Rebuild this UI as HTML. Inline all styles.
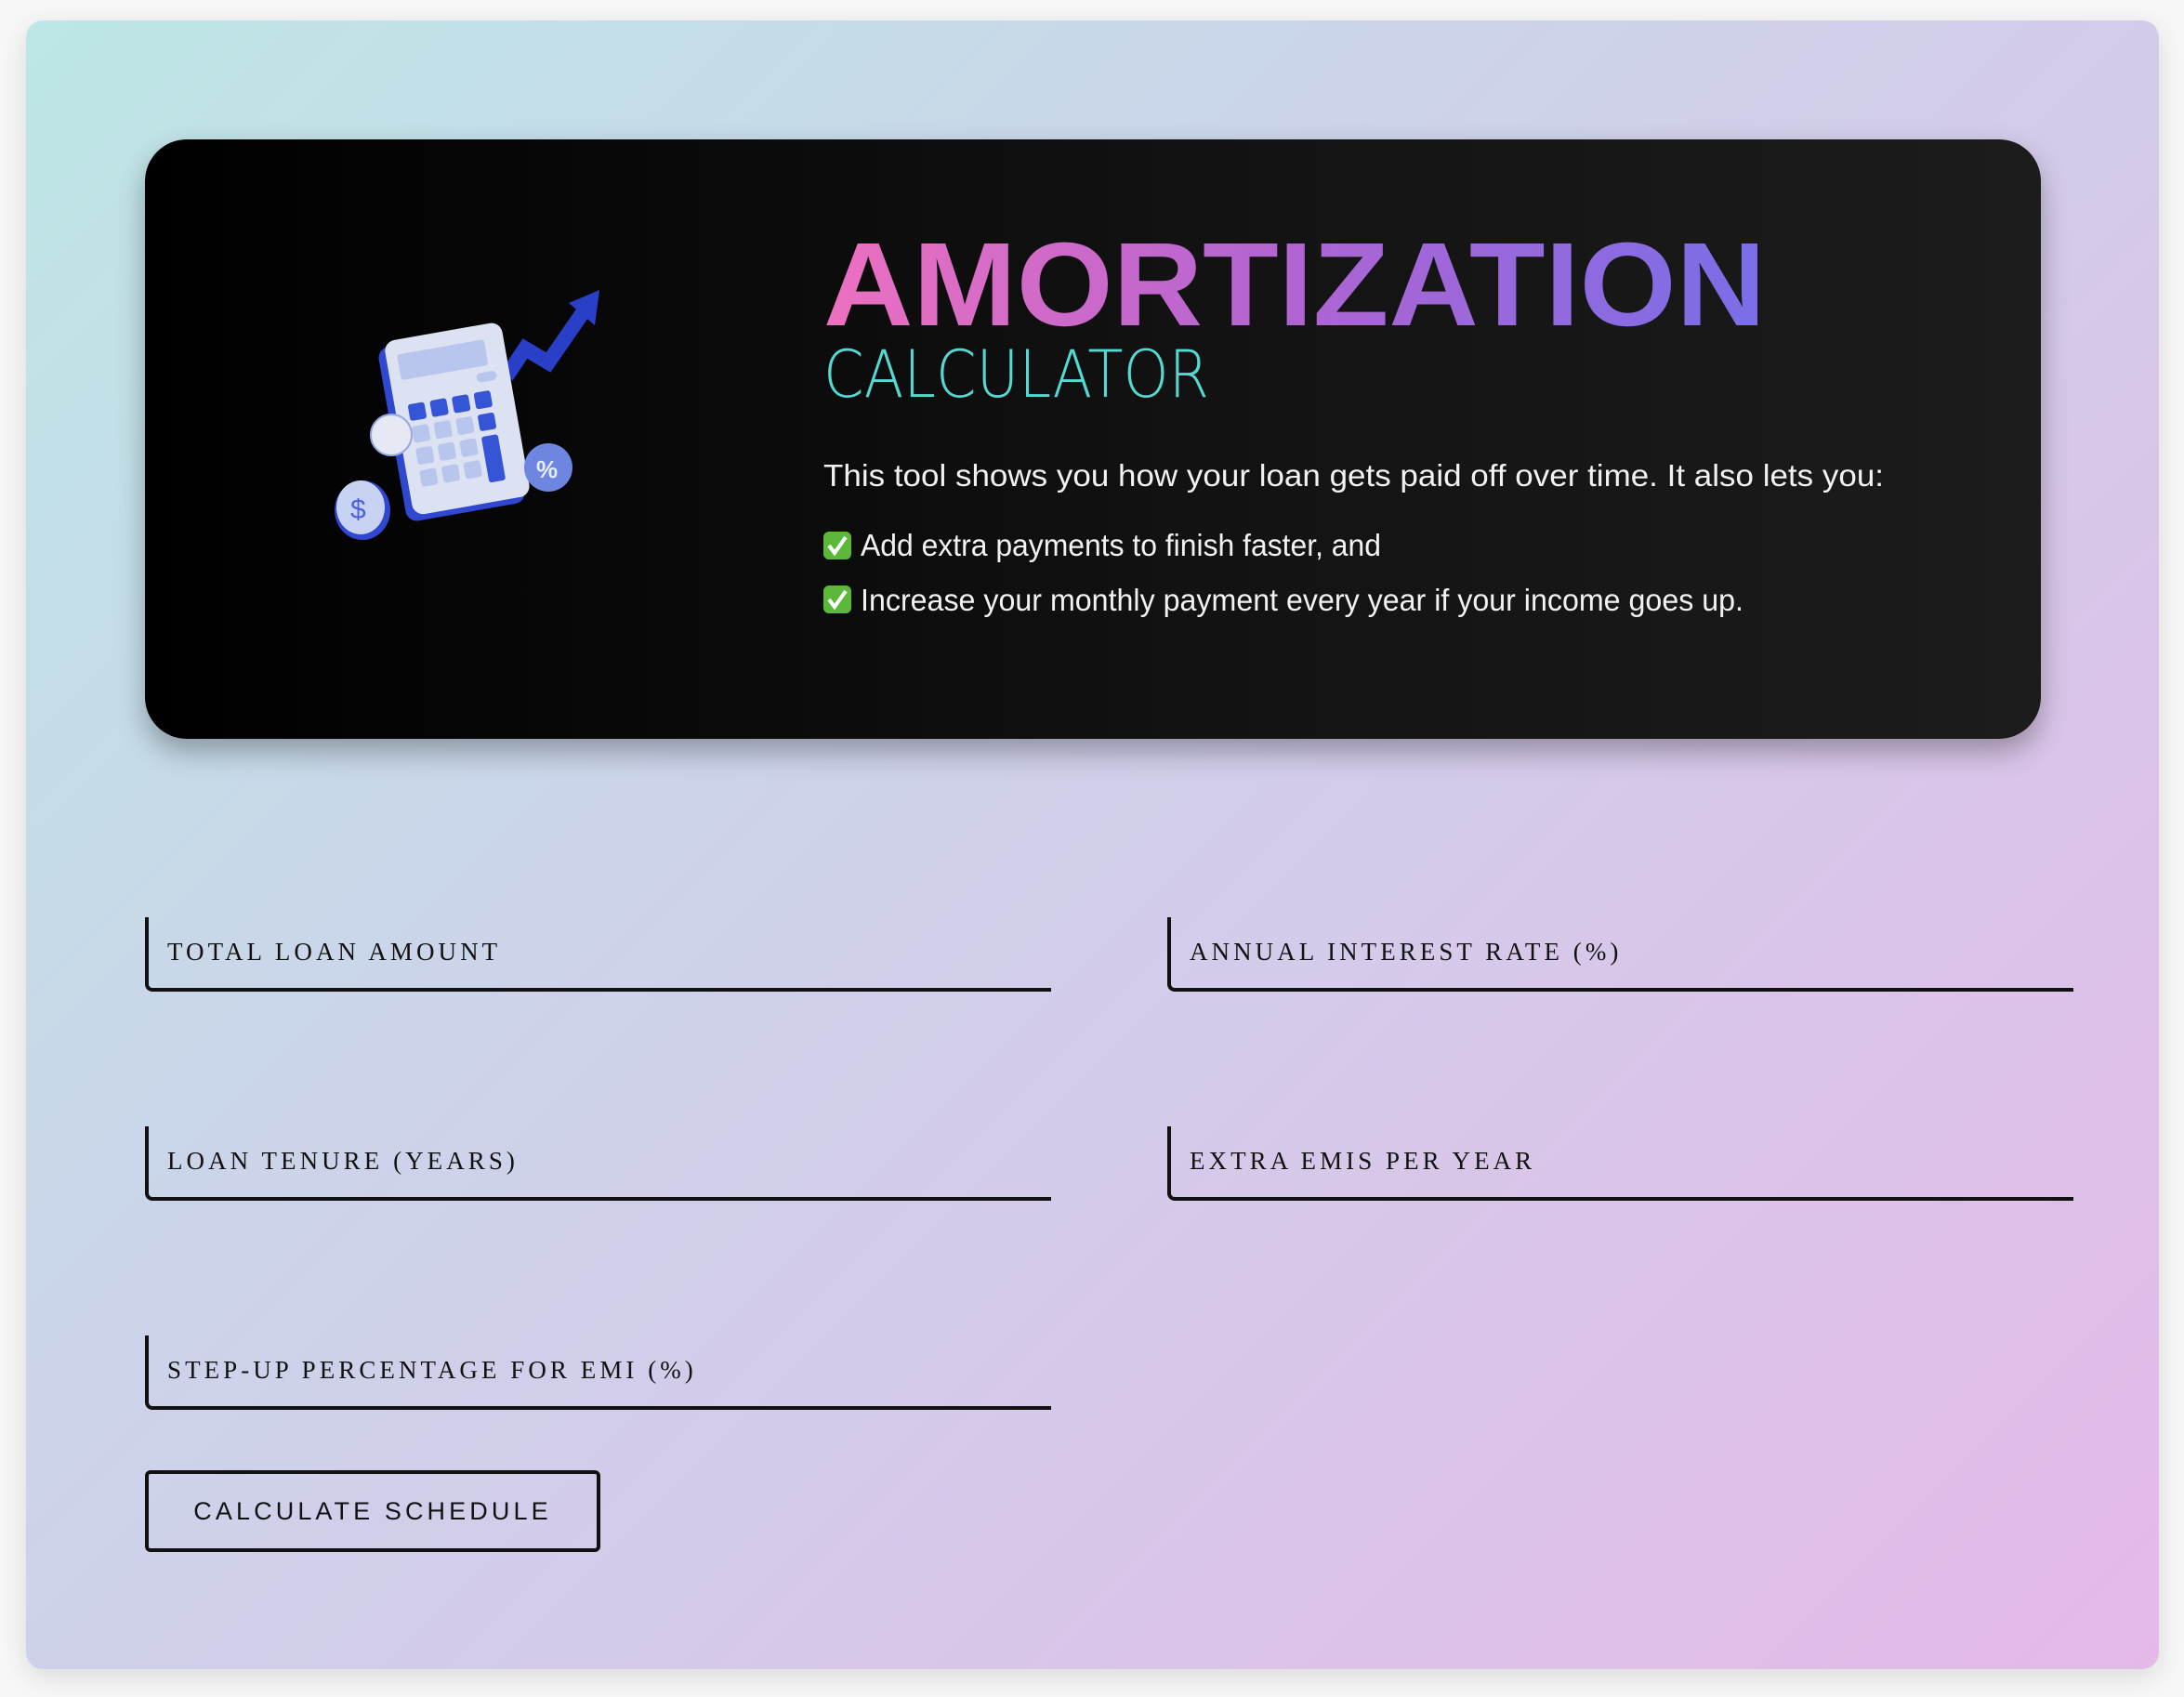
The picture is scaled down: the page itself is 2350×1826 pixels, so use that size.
<!DOCTYPE html>
<html><head><meta charset="utf-8"><style>
html,body{margin:0;padding:0;width:2350px;height:1826px;background:#f7f7f7;overflow:hidden}
.outer{position:absolute;left:28px;top:22px;width:2295px;height:1774px;border-radius:18px;background:linear-gradient(135deg,#bde6e6 0%,#cfd0ea 45%,#e4b9e8 100%);box-shadow:0 8px 30px rgba(0,0,0,.12)}
.hero{position:absolute;left:156px;top:150px;width:2040px;height:645px;border-radius:45px;background:linear-gradient(90deg,#000 0%,#121212 55%,#1c1c1c 100%);box-shadow:0 14px 30px rgba(0,0,0,.3)}
.field{position:absolute;border-left:4px solid #111;border-bottom:4px solid #111;border-bottom-left-radius:8px;height:76px;width:971px}
.field span{position:absolute;left:20px;top:22px;font-family:"Liberation Serif",serif;font-size:27px;letter-spacing:4.05px;color:#111}
.btn{position:absolute;left:156px;top:1582px;width:482px;height:80px;border:4px solid #111;border-radius:6px;font-family:"Liberation Sans",sans-serif;font-size:27px;letter-spacing:4.1px;color:#111;line-height:80px;text-align:center}
</style></head><body>
<div class="outer"></div>
<div class="hero"></div>
<svg style="position:absolute;left:0;top:0" width="2350" height="900">
<defs>
<linearGradient id="g" x1="886" x2="1900" y1="0" y2="0" gradientUnits="userSpaceOnUse">
<stop offset="0" stop-color="#ec70c0"/><stop offset="0.5" stop-color="#b064d2"/><stop offset="1" stop-color="#7a6ee8"/></linearGradient>
</defs>
<text x="886" y="350" font-family="Liberation Sans,sans-serif" font-weight="bold" font-size="128" fill="url(#g)" textLength="1014" lengthAdjust="spacingAndGlyphs">AMORTIZATION</text>
<text x="886" y="427" font-family="DejaVu Sans,sans-serif" font-size="70" fill="#55d8d2" textLength="415" lengthAdjust="spacingAndGlyphs" style="font-weight:200">CALCULATOR</text>
<text x="886" y="523" font-family="Liberation Sans,sans-serif" font-size="33" fill="#f2f2f2" textLength="1141" lengthAdjust="spacingAndGlyphs">This tool shows you how your loan gets paid off over time. It also lets you:</text>
<rect x="886" y="572" width="30" height="30" rx="6" fill="#5cb83a"/><path d="M892 587l6 8 12-17" stroke="#fff" stroke-width="4" fill="none"/>
<text x="926" y="598" font-family="Liberation Sans,sans-serif" font-size="33" fill="#f2f2f2" textLength="560" lengthAdjust="spacingAndGlyphs">Add extra payments to finish faster, and</text>
<rect x="886" y="630" width="30" height="30" rx="6" fill="#5cb83a"/><path d="M892 645l6 8 12-17" stroke="#fff" stroke-width="4" fill="none"/>
<text x="926" y="657" font-family="Liberation Sans,sans-serif" font-size="33" fill="#f2f2f2" textLength="950" lengthAdjust="spacingAndGlyphs">Increase your monthly payment every year if your income goes up.</text>
<!-- icon -->
<polyline points="545,405 565,375 590,390 628,335" stroke="#2a3fc8" stroke-width="16" fill="none" stroke-linejoin="miter"/>
<polygon points="612,326 645,312 640,350" fill="#2a3fc8"/>
<g transform="rotate(-10 500 450)">
<rect x="420" y="360" width="130" height="190" rx="12" fill="#3048d0"/>
<rect x="428" y="354" width="128" height="190" rx="12" fill="#dde2f2"/>
<rect x="440" y="370" width="95" height="28" rx="3" fill="#b8c6ee"/>
<rect x="520" y="405" width="22" height="10" rx="5" fill="#b8c6ee"/>
<g fill="#3555d6"><rect x="442" y="425" width="18" height="18" rx="3"/><rect x="466" y="425" width="18" height="18" rx="3"/><rect x="490" y="425" width="18" height="18" rx="3"/><rect x="514" y="425" width="18" height="18" rx="3"/><rect x="514" y="449" width="18" height="18" rx="3"/><rect x="514" y="473" width="18" height="50" rx="3"/></g>
<g fill="#b8c6ee"><rect x="442" y="449" width="18" height="18" rx="3"/><rect x="466" y="449" width="18" height="18" rx="3"/><rect x="490" y="449" width="18" height="18" rx="3"/><rect x="442" y="473" width="18" height="18" rx="3"/><rect x="466" y="473" width="18" height="18" rx="3"/><rect x="490" y="473" width="18" height="18" rx="3"/><rect x="442" y="497" width="18" height="18" rx="3"/><rect x="466" y="497" width="18" height="18" rx="3"/><rect x="490" y="497" width="18" height="18" rx="3"/></g>
</g>
<circle cx="421" cy="468" r="22" fill="#e6e9f4" stroke="#9aa8e0" stroke-width="2"/>
<ellipse cx="390" cy="549" rx="30" ry="32" fill="#3048d0"/>
<ellipse cx="388" cy="546" rx="26" ry="29" fill="#c8d2f2"/>
<text x="377" y="558" font-family="Liberation Sans,sans-serif" font-size="30" fill="#4a62d8">$</text>
<circle cx="590" cy="503" r="26" fill="#6f86e0"/>
<text x="577" y="514" font-family="Liberation Sans,sans-serif" font-weight="bold" font-size="26" fill="#e6ecff">%</text>
</svg>
<div class="field" style="left:156px;top:987px"><span>TOTAL LOAN AMOUNT</span></div>
<div class="field" style="left:1256px;top:987px"><span>ANNUAL INTEREST RATE (%)</span></div>
<div class="field" style="left:156px;top:1212px"><span>LOAN TENURE (YEARS)</span></div>
<div class="field" style="left:1256px;top:1212px"><span>EXTRA EMIS PER YEAR</span></div>
<div class="field" style="left:156px;top:1437px"><span>STEP-UP PERCENTAGE FOR EMI (%)</span></div>
<div class="btn">CALCULATE SCHEDULE</div>
</body></html>
